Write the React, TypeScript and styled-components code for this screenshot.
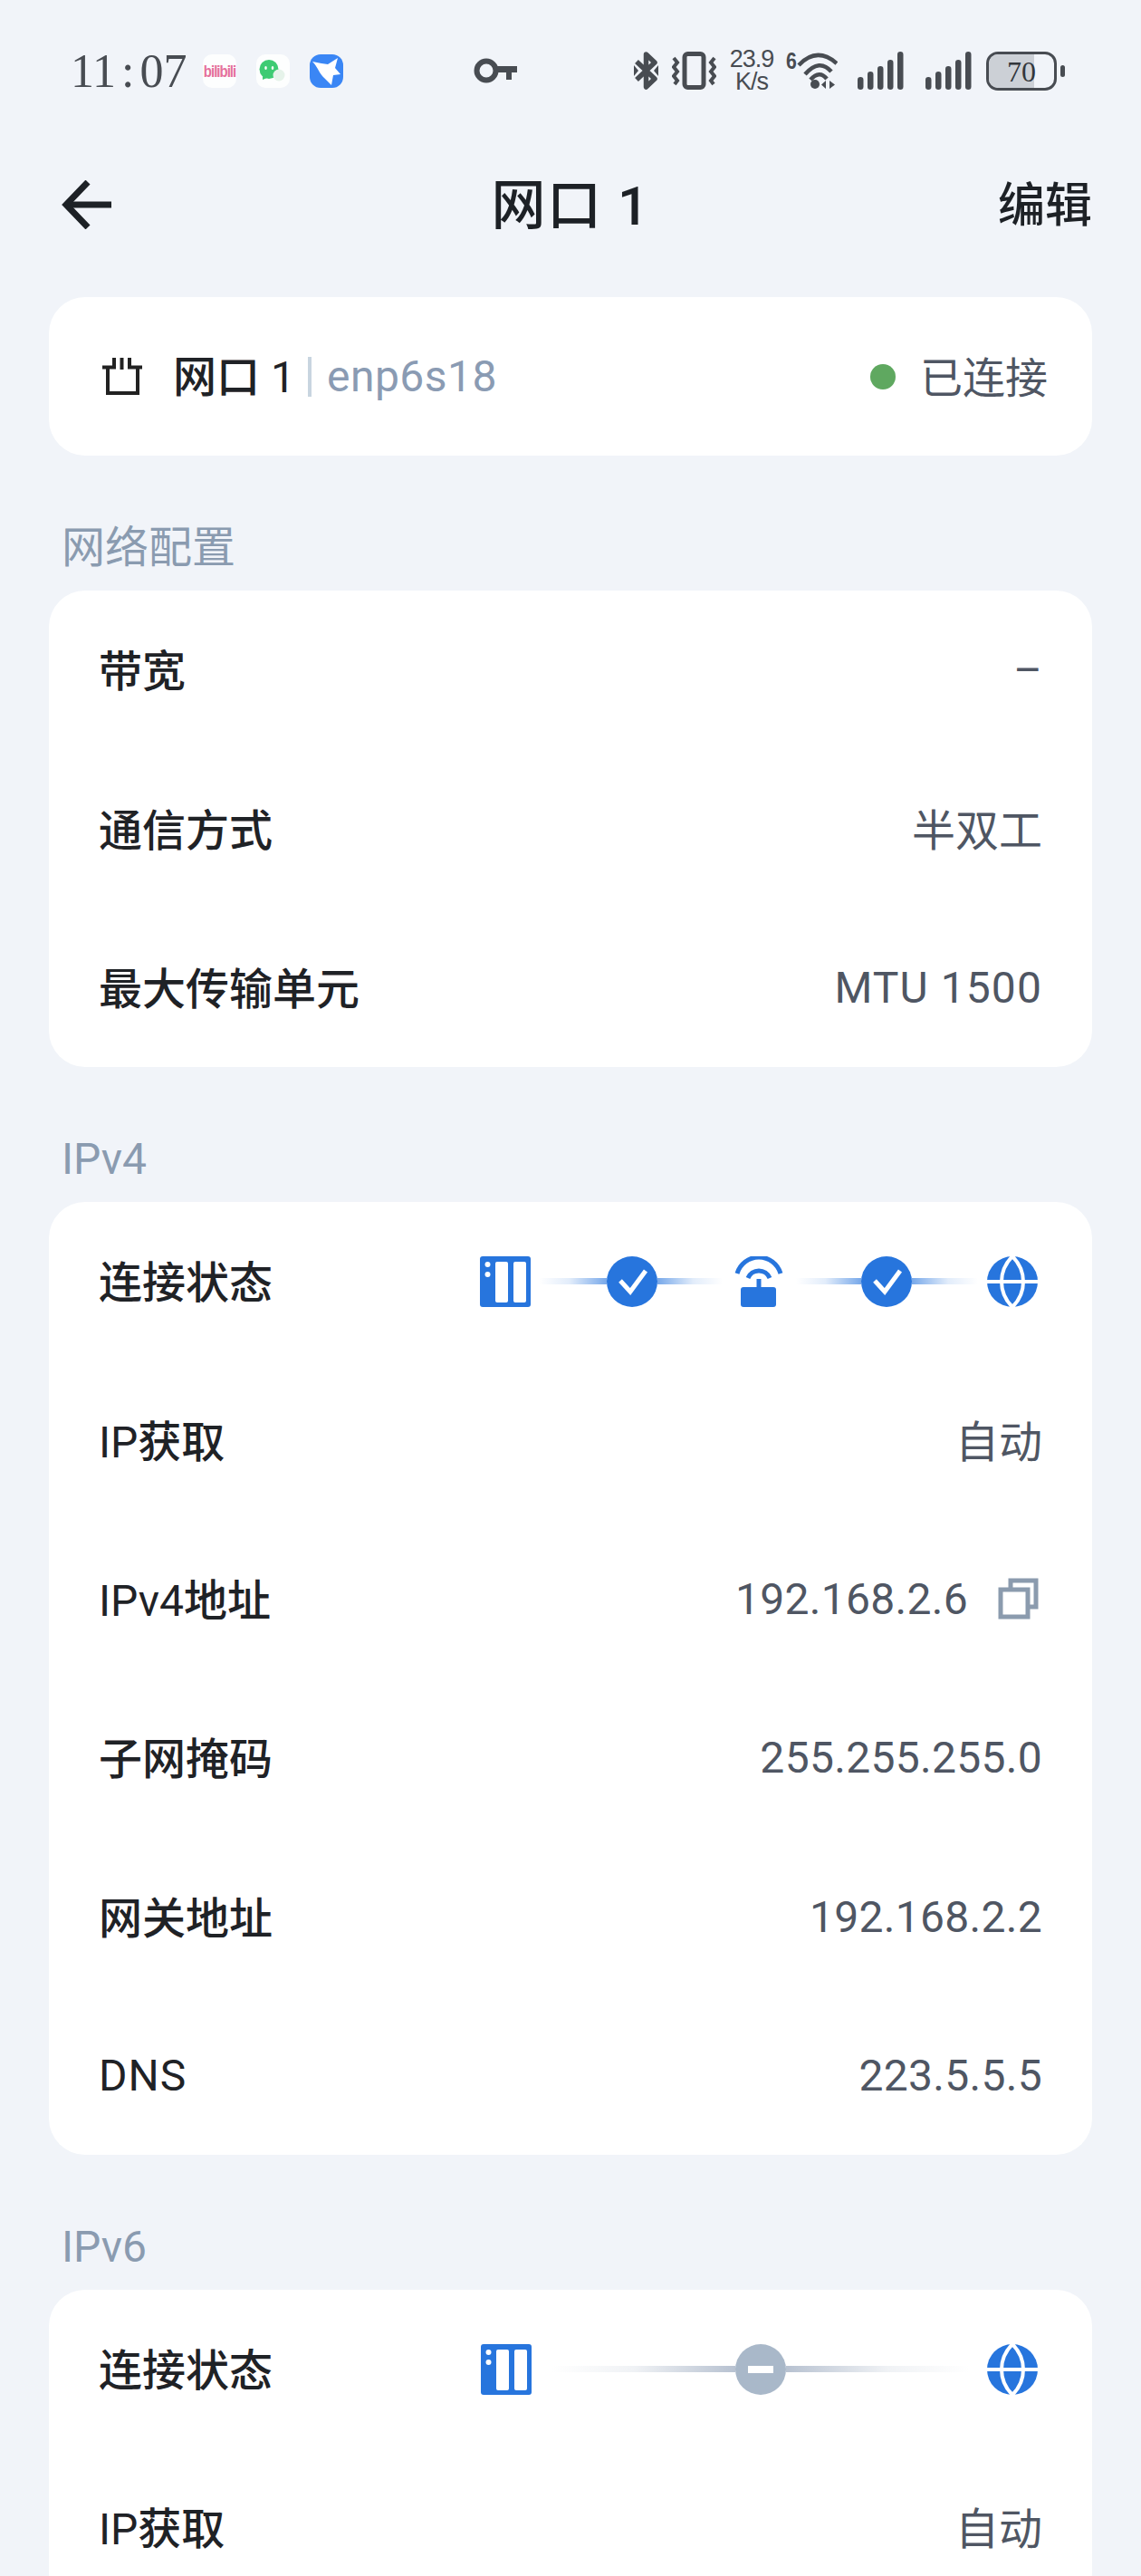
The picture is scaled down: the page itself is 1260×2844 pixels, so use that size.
import React from 'react';
import styled, { createGlobalStyle } from 'styled-components';

const GlobalStyle = createGlobalStyle`
  html, body {
    margin: 0;
    padding: 0;
    background: #f1f4f9;
  }
`;

const Page = styled.div`
  width: 1260px;
  height: 2844px;
  overflow: hidden;
  background: #f1f4f9;
  font-family: Roboto, "Noto Sans CJK SC", sans-serif;
`;

const StatusBar = styled.div`
  display: flex;
  align-items: center;
  justify-content: space-between;
  height: 156px;
  padding: 0 84px 0 78px;
  box-sizing: border-box;
  color: #484c52;
`;

const StatusGroup = styled.div`
  display: flex;
  align-items: center;
`;

const Clock = styled.div`
  width: 146px;
  font-family: "Liberation Serif", serif;
  font-size: 52px;
  color: #484c52;
`;

const ClockColon = styled.span`
  margin: 0 6px;
`;

const AppIcon = styled.div`
  width: 37px;
  height: 37px;
  margin-right: 22px;
  border-radius: 10px;
  background: #fdfefe;
  display: flex;
  align-items: center;
  justify-content: center;
  overflow: hidden;
`;

const BiliText = styled.span`
  display: inline-block;
  font-size: 15px;
  font-weight: 700;
  letter-spacing: -1px;
  color: #e5709c;
  font-family: "Liberation Sans", sans-serif;
  transform: scaleY(1.2);
`;

const NetSpeed = styled.div`
  width: 50px;
  margin: 0 12px 0 14px;
  text-align: center;
  font-size: 27px;
  line-height: 25px;
  letter-spacing: -1px;
  font-family: "Liberation Sans", sans-serif;
`;

const WifiMark = styled.div`
  display: flex;
  align-items: flex-start;
`;

const WifiSix = styled.span`
  width: 13px;
  font-size: 25px;
  line-height: 20px;
  font-weight: 700;
  font-family: "Liberation Sans", sans-serif;
  transform: scaleX(0.85);
`;

const Battery = styled.div`
  position: relative;
  width: 78px;
  height: 43px;
  margin-left: 16px;
  box-sizing: border-box;
  border: 3px solid #484c52;
  border-radius: 13px;
  overflow: hidden;
  text-align: center;
  font-family: "Liberation Serif", serif;
  font-size: 32px;
  line-height: 38px;
  color: #33373c;
`;

const BatteryFill = styled.div<{ $level: number }>`
  position: absolute;
  left: 0;
  top: 0;
  bottom: 0;
  width: ${p => p.$level}%;
  background: #ccd0d6;
`;

const BatteryLabel = styled.span`
  position: relative;
`;

const BatteryTip = styled.div`
  width: 5px;
  height: 13px;
  margin-left: 4px;
  border-radius: 3px;
  background: #484c52;
`;

const NavBar = styled.div`
  display: grid;
  grid-template-columns: 1fr auto 1fr;
  align-items: center;
  height: 144px;
  padding: 0 54px;
  margin-bottom: 28px;
  box-sizing: border-box;
  color: #1d2126;
`;

const BackButton = styled.div`
  display: flex;
  align-items: center;
  margin-left: 14px;
  padding-bottom: 4px;
`;

const NavTitle = styled.div`
  font-size: 60px;
  font-weight: 500;
  line-height: 70px;
  letter-spacing: 1.5px;
`;

const NavAction = styled.div`
  justify-self: end;
  font-size: 52px;
  font-weight: 500;
  line-height: 70px;
`;

const Card = styled.div`
  margin: 0 54px;
  border-radius: 40px;
  background: #ffffff;
`;

const SectionLabel = styled.div`
  height: 149px;
  padding: 76px 0 0 68px;
  box-sizing: border-box;
  font-size: 48px;
  line-height: 52px;
  color: #8a9bb0;
`;

const Row = styled.div`
  display: flex;
  align-items: center;
  justify-content: space-between;
  height: 175.3px;
  padding: 0 55px;
  box-sizing: border-box;
`;

const RowLabel = styled.div<{ $latin?: boolean }>`
  padding-bottom: ${p => (p.$latin ? 0 : 5)}px;
  font-size: 48px;
  font-weight: 500;
  letter-spacing: ${p => (p.$latin ? 1 : 0)}px;
  color: #1f2226;
`;

const Latin = styled.span`
  font-weight: 400;
`;

const RowValue = styled.div<{ $han?: boolean; $wide?: boolean }>`
  display: flex;
  align-items: center;
  padding-bottom: ${p => (p.$han ? 5 : 0)}px;
  font-size: 48px;
  letter-spacing: ${p => (p.$han ? 0 : p.$wide ? 1.1 : 0.3)}px;
  color: #4f5663;
`;

const PortInfo = styled.div`
  display: flex;
  align-items: center;
  padding-left: 3px;
`;

const PortName = styled.div`
  margin-left: 33px;
  padding-bottom: 8px;
  font-size: 48px;
  font-weight: 500;
  color: #1f2226;
`;

const PortDivider = styled.div`
  width: 4px;
  height: 44px;
  margin: 0 17px 0 14px;
  background: #c8d5e0;
`;

const PortDevice = styled.div`
  font-size: 48px;
  letter-spacing: 0.5px;
  color: #8a9bb3;
`;

const LinkState = styled.div`
  display: flex;
  align-items: center;
  margin-right: -6px;
  font-size: 47px;
  color: #4f5663;
`;

const LinkDot = styled.span`
  width: 28px;
  height: 28px;
  margin-right: 27px;
  border-radius: 50%;
  background: #5fa860;
`;

const LinkText = styled.span`
  padding-bottom: 4px;
`;

const CopyButton = styled.span`
  display: flex;
  margin: 0 4px 0 33px;
`;

const Flow = styled.div`
  display: flex;
  align-items: center;
  margin-right: 5px;
`;

const FlowLine = styled.div<{ $length: number; $toward: 'left' | 'right'; $tone: string }>`
  width: ${p => p.$length}px;
  height: 7px;
  background: linear-gradient(to ${p => p.$toward}, rgba(255, 255, 255, 0), ${p => p.$tone}22 45%, ${p => p.$tone}a0);
`;

const Gap = styled.div<{ $w: number }>`
  flex: none;
  width: ${p => p.$w}px;
`;

const BLUE = '#2775dd';
const GREY = '#a9b8c9';
const SLATE = '#8d9db5';
const INK = '#484c52';

const ServerIcon = () => (
  <svg width="56" height="56" viewBox="0 0 56 56">
    <rect width="56" height="56" rx="3" fill={BLUE} />
    <rect x="17" y="6" width="14" height="45" rx="2" fill="#fff" />
    <rect x="37" y="6" width="14" height="45" rx="2" fill="#fff" />
    <circle cx="8.5" cy="9" r="3" fill="#fff" />
    <circle cx="8.5" cy="20" r="3" fill="#fff" />
  </svg>
);

const CheckIcon = () => (
  <svg width="56" height="56" viewBox="0 0 56 56">
    <circle cx="28" cy="28" r="28" fill={BLUE} />
    <path d="M15 27l11 12 17-23" fill="none" stroke="#fff" strokeWidth="5" />
  </svg>
);

const RouterIcon = () => (
  <svg width="54" height="56" viewBox="0 0 54 56">
    <path d="M3 19A25 25 0 0 1 51 19" fill="none" stroke={BLUE} strokeWidth="5" />
    <path d="M15 24A13 13 0 0 1 39 24" fill="none" stroke={BLUE} strokeWidth="5" />
    <rect x="24.5" y="25" width="5" height="10" fill={BLUE} />
    <rect x="7" y="34" width="39" height="22" rx="3" fill={BLUE} />
  </svg>
);

const GlobeIcon = () => (
  <svg width="56" height="56" viewBox="0 0 56 56">
    <circle cx="28" cy="28" r="28" fill={BLUE} />
    <path d="M0 28H56" stroke="#fff" strokeWidth="4" />
    <path d="M28 0C12 16 12 40 28 56C44 40 44 16 28 0Z" fill="none" stroke="#fff" strokeWidth="4" />
  </svg>
);

const MinusIcon = () => (
  <svg width="56" height="56" viewBox="0 0 56 56">
    <circle cx="28" cy="28" r="28" fill={GREY} />
    <rect x="14" y="24" width="28" height="8" fill="#fff" />
  </svg>
);

const CopyIcon = () => (
  <svg width="45" height="46" viewBox="0 0 45 46" fill="none" stroke="#8b9bae" strokeWidth="5">
    <path d="M14 11V3H42V32H34" />
    <rect x="3" y="13" width="30" height="30" />
  </svg>
);

const PortIcon = () => (
  <svg width="46" height="43" viewBox="0 0 46 43" fill="none" stroke="#222" strokeWidth="4">
    <path d="M1 11.5H14V1" />
    <path d="M7 11.5V40H40V11.5" />
    <path d="M45 11.5H31V1" />
    <path d="M22.5 1V14" />
  </svg>
);

const BackArrow = () => (
  <svg width="56" height="54" viewBox="0 0 56 54" fill="none" stroke="#1d2126" strokeWidth="7">
    <path d="M55 27H6" />
    <path d="M29 2L5 27L29 52" />
  </svg>
);

const WechatIcon = () => (
  <svg width="37" height="37" viewBox="0 0 37 37">
    <ellipse cx="14" cy="16.5" rx="10.5" ry="10.5" fill="#3ecb73" />
    <path d="M7 24L7 28L12 26Z" fill="#3ecb73" />
    <circle cx="25" cy="23" r="6.5" fill="#e6f3ea" />
    <ellipse cx="10.5" cy="15" rx="1.3" ry="2" fill="#fff" />
    <ellipse cx="18" cy="15" rx="1.3" ry="2" fill="#fff" />
  </svg>
);

const BirdIcon = () => (
  <svg width="37" height="37" viewBox="0 0 37 37">
    <rect width="37" height="37" rx="12" fill="#3a86f5" />
    <path d="M3 8L13 10L20 11L31 4L28 15L34 22L26 23L24 34L16 26C11 22 9 14 3 8Z" fill="#fff" />
  </svg>
);

const KeyIcon = () => (
  <svg width="48" height="30" viewBox="0 0 48 30">
    <circle cx="14" cy="15" r="10.5" fill="none" stroke={INK} strokeWidth="6" />
    <path d="M24 10H48V17H42V25H36V17H24Z" fill={INK} />
  </svg>
);

const BluetoothIcon = () => (
  <svg width="27" height="42" viewBox="0 0 27 42" fill={INK}>
    <path
      d="M3 11L23 30L13.5 39V3L23 12L3 31"
      fill="none"
      stroke={INK}
      strokeWidth="5.5"
      strokeLinejoin="round"
    />
    <path d="M0 15L5 21L0 27Z" />
    <path d="M27 15L22 21L27 27Z" />
  </svg>
);

const VibrateIcon = () => (
  <svg width="49" height="42" viewBox="0 0 49 42" fill="none" stroke={INK} strokeWidth="4">
    <rect x="14" y="2.5" width="21" height="37" rx="3.5" strokeWidth="5" />
    <path d="M2 7L6 12L2 17L6 22L2 27L6 32L3 36" />
    <path d="M47 7L43 12L47 17L43 22L47 27L43 32L46 36" />
  </svg>
);

const WifiIcon = () => (
  <svg width="45" height="42" viewBox="0 0 45 42" fill="none" stroke={INK} strokeWidth="4.5">
    <path d="M2 15Q22 -6 44 13" />
    <path d="M9 25Q25 7 38 22" />
    <path d="M15 31Q25 20 33 30" />
    <circle cx="20" cy="36" r="5" fill={INK} stroke="none" />
    <path d="M32 32V41L27 36.5ZM36 32V41L42 36.5Z" fill={INK} stroke="none" />
  </svg>
);

const SignalIcon = () => (
  <svg width="51" height="42" viewBox="0 0 51 42" fill={INK}>
    <rect x="0" y="28" width="6.5" height="14" rx="3.2" />
    <rect x="11" y="22" width="6.5" height="20" rx="3.2" />
    <rect x="22" y="16" width="6.5" height="26" rx="3.2" />
    <rect x="33" y="9" width="6.5" height="33" rx="3.2" />
    <rect x="44" y="0" width="6.5" height="42" rx="3.2" />
  </svg>
);

const App: React.FC = () => {
  const ipv4Flow = (
    <Flow>
      <ServerIcon />
      <Gap $w={9} />
      <FlowLine $length={75} $toward="right" $tone={BLUE} />
      <CheckIcon />
      <FlowLine $length={72} $toward="left" $tone={BLUE} />
      <Gap $w={13} />
      <RouterIcon />
      <Gap $w={14} />
      <FlowLine $length={72} $toward="right" $tone={BLUE} />
      <CheckIcon />
      <FlowLine $length={73} $toward="left" $tone={BLUE} />
      <Gap $w={10} />
      <GlobeIcon />
    </Flow>
  );

  const ipv6Flow = (
    <Flow>
      <ServerIcon />
      <Gap $w={22} />
      <FlowLine $length={203} $toward="right" $tone={SLATE} />
      <MinusIcon />
      <FlowLine $length={203} $toward="left" $tone={SLATE} />
      <Gap $w={19} />
      <GlobeIcon />
    </Flow>
  );

  return (
    <Page>
      <GlobalStyle />
      <StatusBar>
        <StatusGroup>
          <Clock>
            11<ClockColon>:</ClockColon>07
          </Clock>
          <AppIcon>
            <BiliText>bilibili</BiliText>
          </AppIcon>
          <AppIcon>
            <WechatIcon />
          </AppIcon>
          <BirdIcon />
          <Gap $w={144} />
          <KeyIcon />
        </StatusGroup>
        <StatusGroup>
          <BluetoothIcon />
          <Gap $w={15} />
          <VibrateIcon />
          <NetSpeed>
            23.9
            <br />
            K/s
          </NetSpeed>
          <WifiMark>
            <WifiSix>6</WifiSix>
            <WifiIcon />
          </WifiMark>
          <Gap $w={22} />
          <SignalIcon />
          <Gap $w={24} />
          <SignalIcon />
          <Battery>
            <BatteryFill $level={70} />
            <BatteryLabel>70</BatteryLabel>
          </Battery>
          <BatteryTip />
        </StatusGroup>
      </StatusBar>

      <NavBar>
        <BackButton>
          <BackArrow />
        </BackButton>
        <NavTitle>网口 1</NavTitle>
        <NavAction>编辑</NavAction>
      </NavBar>

      <Card>
        <Row>
          <PortInfo>
            <PortIcon />
            <PortName>
              网口 <Latin>1</Latin>
            </PortName>
            <PortDivider />
            <PortDevice>enp6s18</PortDevice>
          </PortInfo>
          <LinkState>
            <LinkDot />
            <LinkText>已连接</LinkText>
          </LinkState>
        </Row>
      </Card>

      <SectionLabel>网络配置</SectionLabel>
      <Card>
        <Row>
          <RowLabel>带宽</RowLabel>
          <RowValue>–</RowValue>
        </Row>
        <Row>
          <RowLabel>通信方式</RowLabel>
          <RowValue $han>半双工</RowValue>
        </Row>
        <Row>
          <RowLabel>最大传输单元</RowLabel>
          <RowValue $wide>MTU 1500</RowValue>
        </Row>
      </Card>

      <SectionLabel>IPv4</SectionLabel>
      <Card>
        <Row>
          <RowLabel>连接状态</RowLabel>
          {ipv4Flow}
        </Row>
        <Row>
          <RowLabel>
            <Latin>IP</Latin>获取
          </RowLabel>
          <RowValue $han>自动</RowValue>
        </Row>
        <Row>
          <RowLabel>
            <Latin>IPv4</Latin>地址
          </RowLabel>
          <RowValue>
            192.168.2.6
            <CopyButton>
              <CopyIcon />
            </CopyButton>
          </RowValue>
        </Row>
        <Row>
          <RowLabel>子网掩码</RowLabel>
          <RowValue>255.255.255.0</RowValue>
        </Row>
        <Row>
          <RowLabel>网关地址</RowLabel>
          <RowValue>192.168.2.2</RowValue>
        </Row>
        <Row>
          <RowLabel $latin>
            <Latin>DNS</Latin>
          </RowLabel>
          <RowValue>223.5.5.5</RowValue>
        </Row>
      </Card>

      <SectionLabel>IPv6</SectionLabel>
      <Card>
        <Row>
          <RowLabel>连接状态</RowLabel>
          {ipv6Flow}
        </Row>
        <Row>
          <RowLabel>
            <Latin>IP</Latin>获取
          </RowLabel>
          <RowValue $han>自动</RowValue>
        </Row>
      </Card>
    </Page>
  );
};

export default App;
